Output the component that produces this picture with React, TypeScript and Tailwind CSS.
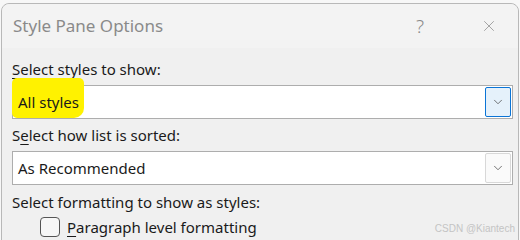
import { ChevronDown, X } from "lucide-react";

const font = { fontFamily: '"Segoe UI", "Noto Sans", "Open Sans", sans-serif' };

function Select({ value, focused, children }: { value: string; focused?: boolean; children?: React.ReactNode }) {
  return (
    <div className="relative flex h-[34px] items-center border border-[#adadad] bg-white">
      {children}
      <span className="relative flex-1 pl-[5px] text-[15px] text-[#1a1a1a]">{value}</span>
      <div
        className={
          focused
            ? "mr-[1px] flex h-[30px] w-[26px] items-center justify-center rounded-[2px] border border-[#0a74d6] bg-[#e5f1fb]"
            : "mr-[1px] flex h-[30px] w-[26px] items-center justify-center rounded-[2px] border border-[#d8d8d8] bg-[#fafafa]"
        }
      >
        <ChevronDown className="h-[14px] w-[14px] text-[#444]" strokeWidth={1.25} />
      </div>
    </div>
  );
}

export default function App() {
  return (
    <div className="h-[240px] w-[520px] overflow-hidden bg-[#f7f7f7] px-[1px] pt-[3px]" style={font}>
      <div className="h-[260px] rounded-t-[8px] border border-[#b8b8b8] bg-[#f0f0f0]">
        <div className="flex h-[44px] items-center justify-between rounded-t-[8px] bg-[#f3f3f3] pl-[11px] pr-[20px]">
          <span className="text-[17px] text-[#8a8a8a]">Style Pane Options</span>
          <div className="flex items-center gap-[56px] text-[#8a8a8a]">
            <span className="text-[19px] font-light">?</span>
            <X className="h-[18px] w-[18px]" strokeWidth={1} />
          </div>
        </div>
        <div className="relative pl-[10px] pr-[5px] pt-[10px] text-[15px] text-[#1a1a1a]">
          <div className="leading-[22px]">
            <span className="underline underline-offset-[3px]">S</span>elect styles to show:
          </div>
          <div className="mt-[5px]">
            <Select value="All styles" focused>
              <div className="absolute left-[-1px] top-[-8px] h-[40px] w-[72px] rounded-[5px] rounded-br-[10px] bg-[#fff200]" />
            </Select>
          </div>
          <div className="mt-[5px] leading-[22px]">
            S<span className="underline underline-offset-[3px]">e</span>lect how list is sorted:
          </div>
          <div className="mt-[5px]">
            <Select value="As Recommended" />
          </div>
          <div className="mt-[6px] leading-[22px]">Select formatting to show as styles:</div>
          <div className="mt-[3px] flex items-center gap-[7px] pl-[28px] leading-[22px]">
            <div className="h-[20px] w-[20px] rounded-[4px] border border-[#555] bg-[#f7f7f7]" />
            <span>
              <span className="underline underline-offset-[3px]">P</span>aragraph level formatting
            </span>
          </div>
          <div className="absolute right-[3px] top-[173px] text-[10px] text-[#c4c4c4]" style={{ fontFamily: '"Liberation Sans", sans-serif' }}>
            CSDN @Kiantech
          </div>
        </div>
      </div>
    </div>
  );
}
